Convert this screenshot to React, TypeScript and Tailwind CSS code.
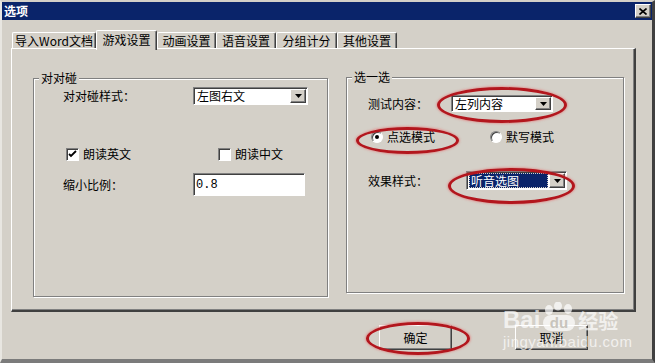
import type { ReactNode } from 'react';

const raised =
  'border border-t-white border-l-white border-r-[#404040] border-b-[#404040] shadow-[inset_-1px_-1px_0_#808080]';
const sunken =
  'border border-t-[#808080] border-l-[#808080] border-r-white border-b-white shadow-[inset_1px_1px_0_#404040]';
const groupBox =
  'border border-[#808080] shadow-[inset_1px_1px_0_#fff,1px_1px_0_#fff] m-0 p-0';

const tabs: [string, number][] = [
  ['导入Word文档', 84],
  ['游戏设置', 61],
  ['动画设置', 59],
  ['语音设置', 60],
  ['分组计分', 61],
  ['其他设置', 60],
];

function Arrow() {
  return (
    <div className={`${raised} w-[16px] h-full bg-[#d4d0c8] flex items-center justify-center`}>
      <svg width="7" height="4" viewBox="0 0 7 4">
        <path d="M0 0h7L3.5 4z" fill="#000" />
      </svg>
    </div>
  );
}

function Combo({ text, w, h, active }: { text: string; w: string; h: string; active?: boolean }) {
  return (
    <div className={`${sunken} ${w} ${h} bg-white flex items-stretch p-[1px]`}>
      <div className="flex-1 flex items-center pl-[1px] pr-[1px] min-w-0">
        {active ? (
          <span className="w-full h-full flex items-center bg-[#0a246a] text-white border border-dotted border-[#d4d0c8] pl-[1px]">
            {text}
          </span>
        ) : (
          <span className="pl-[1px] text-black">{text}</span>
        )}
      </div>
      <Arrow />
    </div>
  );
}

function Check({ on, label }: { on?: boolean; label: string }) {
  return (
    <div className="flex items-center gap-[4px]">
      <div className={`${sunken} w-[13px] h-[13px] bg-white flex items-center justify-center`}>
        {on && (
          <svg width="9" height="9" viewBox="0 0 9 9">
            <path d="M1 4l2 2 5-5" stroke="#000" strokeWidth="1.8" fill="none" />
          </svg>
        )}
      </div>
      <span>{label}</span>
    </div>
  );
}

function Radio({ on, label }: { on?: boolean; label: string }) {
  return (
    <div className="flex items-center gap-[4px]">
      <div className="w-[12px] h-[12px] rounded-full bg-white border border-t-[#808080] border-l-[#808080] border-r-white border-b-white shadow-[inset_1px_1px_0_#404040] flex items-center justify-center">
        {on && <div className="w-[4px] h-[4px] rounded-full bg-black" />}
      </div>
      <span>{label}</span>
    </div>
  );
}

function Button({ children }: { children: ReactNode }) {
  return (
    <div className={`${raised} w-[73px] h-[25px] bg-[#d4d0c8] flex items-center justify-center`}>
      {children}
    </div>
  );
}

function Ring({ cls }: { cls: string }) {
  return (
    <div
      className={`absolute ${cls} rounded-[50%] border-[3px] border-[#b3161d] shadow-[0_0_2px_1px_rgba(230,120,120,0.6)]`}
    />
  );
}

export default function App() {
  return (
    <div className="relative w-[655px] h-[363px] overflow-hidden bg-[#d4d0c8] text-[12px] leading-[14px] text-black font-['Noto_Sans_CJK_SC',sans-serif]">
      <div className="w-full h-full flex flex-col border-t-2 border-l-2 border-r-[3px] border-b-[4px] border-t-[#d4d0c8] border-l-[#e8e6e1] border-r-[#404040] border-b-[#7b7b7b]">
        {/* title bar */}
        <div className="h-[18px] bg-[#0a246a] flex items-center justify-between pl-[2px] pr-[1px]">
          <span className="text-white font-bold text-[12px]">选项</span>
          <div className={`${raised} w-[16px] h-[14px] bg-[#d4d0c8] flex items-center justify-center`}>
            <svg width="8" height="7" viewBox="0 0 8 7">
              <path d="M0.5 0.5l7 6M7.5 0.5l-7 6" stroke="#000" strokeWidth="1.6" />
            </svg>
          </div>
        </div>

        {/* tabs */}
        <div className="mt-[10px] h-[18px] flex items-end pl-[10px]">
          {tabs.map(([t, w], i) =>
            i === 1 ? (
              <div
                key={t}
                style={{ width: w }}
                className="relative z-10 h-[20px] -mb-[2px] bg-[#d4d0c8] border-t border-l border-t-white border-l-white border-r border-r-[#404040] shadow-[inset_-1px_0_0_#808080] rounded-t-[2px] flex items-start justify-center pt-[2px]"
              >
                {t}
              </div>
            ) : (
              <div
                key={t}
                style={{ width: w }}
                className="h-[16px] border-t border-l border-t-white border-l-white border-r border-r-[#404040] shadow-[inset_-1px_0_0_#808080] rounded-t-[2px] flex items-center justify-center"
              >
                {t}
              </div>
            )
          )}
        </div>

        {/* tab panel */}
        <div className="ml-[9px] w-[625px] h-[264px] border-t border-l border-t-white border-l-white border-r-2 border-b-2 border-r-[#404040] border-b-[#404040] shadow-[inset_-1px_-1px_0_#808080]">
          <div className="flex items-start pl-[21px] pt-[22px] gap-[18px]">
            <fieldset className={`${groupBox} w-[295px] h-[226px]`}>
              <legend className="ml-[5px] px-[2px] bg-[#d4d0c8]">对对碰</legend>
              <div className="mt-[2px] flex items-center pl-[29px]">
                <span className="w-[130px]">对对碰样式：</span>
                <Combo text="左图右文" w="w-[115px]" h="h-[18px]" />
              </div>
              <div className="mt-[42px] flex items-center pl-[32px]">
                <div className="w-[152px]">
                  <Check on label="朗读英文" />
                </div>
                <Check label="朗读中文" />
              </div>
              <div className="mt-[12px] flex items-center pl-[29px]">
                <span className="w-[130px]">缩小比例：</span>
                <div className={`${sunken} w-[112px] h-[23px] bg-white flex items-center pl-[2px] font-['Liberation_Mono',monospace]`}>
                  0.8
                </div>
              </div>
            </fieldset>

            <fieldset className={`${groupBox} w-[278px] h-[223px] -mt-[1px]`}>
              <legend className="ml-[5px] px-[2px] bg-[#d4d0c8]">选一选</legend>
              <div className="mt-[11px] flex items-center pl-[21px]">
                <span className="w-[83px]">测试内容：</span>
                <Combo text="左列内容" w="w-[102px]" h="h-[17px]" />
              </div>
              <div className="mt-[18px] flex items-center pl-[24px]">
                <div className="w-[119px]">
                  <Radio on label="点选模式" />
                </div>
                <Radio label="默写模式" />
              </div>
              <div className="mt-[27px] flex items-center pl-[21px]">
                <span className="w-[98px]">效果样式：</span>
                <Combo text="听音选图" w="w-[101px]" h="h-[19px]" active />
              </div>
            </fieldset>
          </div>
        </div>

        {/* buttons */}
        <div className="mt-[13px] flex pl-[377px] gap-[63px]">
          <Button>确定</Button>
          <Button>取消</Button>
        </div>
      </div>

      {/* annotations */}
      <Ring cls="left-[437px] top-[87px] w-[130px] h-[36px]" />
      <Ring cls="left-[356px] top-[127px] w-[103px] h-[27px]" />
      <Ring cls="left-[448px] top-[168px] w-[127px] h-[36px]" />
      <Ring cls="left-[366px] top-[322px] w-[104px] h-[33px]" />

      {/* watermark */}
      <div className="absolute left-[503px] top-[302px] text-white/70 pointer-events-none">
        <div className="flex items-end font-['Liberation_Sans',sans-serif] font-bold text-[24px] leading-[24px]">
          <span>Bai</span>
          <svg width="36" height="30" viewBox="0 0 36 30" className="mx-[1px]">
            <ellipse cx="8" cy="8" rx="4" ry="5" fill="rgba(255,255,255,0.7)" />
            <ellipse cx="17" cy="4" rx="4" ry="4.5" fill="rgba(255,255,255,0.7)" />
            <ellipse cx="27" cy="7" rx="4" ry="5" fill="rgba(255,255,255,0.7)" />
            <rect x="2" y="13" width="32" height="16" rx="8" fill="rgba(255,255,255,0.7)" />
            <text x="18" y="26" textAnchor="middle" fontSize="15" fontWeight="bold" fill="#c8c4bc" fontFamily="Liberation Sans, sans-serif">du</text>
          </svg>
          <span className="font-['Noto_Sans_CJK_SC',sans-serif] text-[20px] leading-[22px]">经验</span>
        </div>
        <div className="font-['Liberation_Sans',sans-serif] text-[15px] leading-[16px] mt-[2px] tracking-[0.5px]">jingyan.baidu.com</div>
      </div>
    </div>
  );
}
